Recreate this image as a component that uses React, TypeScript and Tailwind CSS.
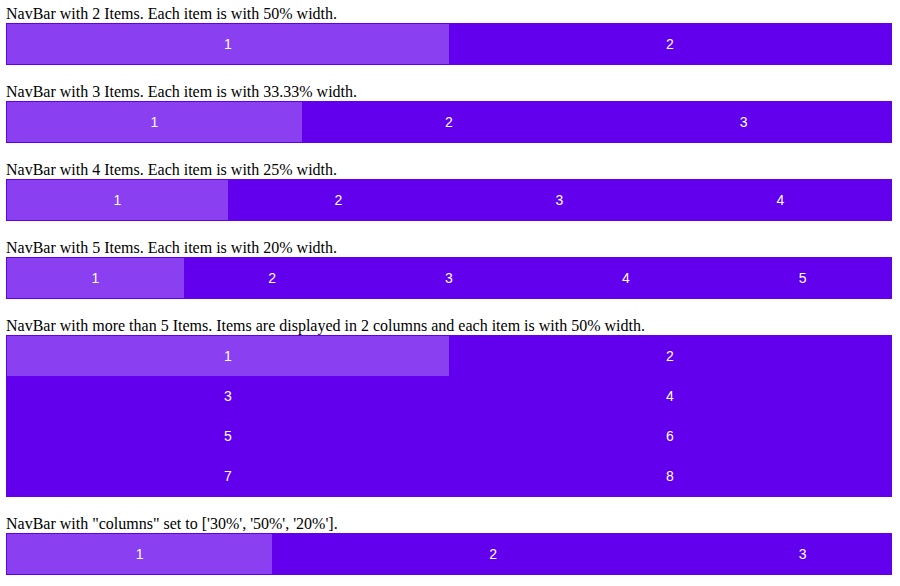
type NavBarProps = {
  count: number;
  columns?: string[];
};

function NavBar({ count, columns }: NavBarProps) {
  const items = Array.from({ length: count }, (_, i) => i + 1);

  // more than 5 items wrap into 2 columns
  const cols =
    columns ?? (count > 5 ? ['50%', '50%'] : items.map(() => `${100 / count}%`));

  return (
    <div
      className="grid border border-[#6200ee] bg-[#6200ee] font-['Liberation_Sans',Arial,sans-serif]"
      style={{ gridTemplateColumns: cols.join(' ') }}
    >
      {items.map((n) => (
        <div
          key={n}
          className={`flex h-10 items-center justify-center text-sm text-white ${
            n === 1 ? 'bg-[#8a40f0]' : ''
          }`}
        >
          {n}
        </div>
      ))}
    </div>
  );
}

const examples: { label: string; count: number; columns?: string[] }[] = [
  { label: 'NavBar with 2 Items. Each item is with 50% width.', count: 2 },
  { label: 'NavBar with 3 Items. Each item is with 33.33% width.', count: 3 },
  { label: 'NavBar with 4 Items. Each item is with 25% width.', count: 4 },
  { label: 'NavBar with 5 Items. Each item is with 20% width.', count: 5 },
  {
    label:
      'NavBar with more than 5 Items. Items are displayed in 2 columns and each item is with 50% width.',
    count: 8,
  },
  {
    label: 'NavBar with "columns" set to [\'30%\', \'50%\', \'20%\'].',
    count: 3,
    columns: ['30%', '50%', '20%'],
  },
];

export default function App() {
  return (
    <div className="min-h-[586px] bg-white pt-[5px] pl-[6px] pr-[8px] font-['Liberation_Serif','Times_New_Roman',serif] text-black">
      {examples.map((ex) => (
        <div key={ex.label} className="mb-[18px]">
          <div className="text-base leading-[18px]">{ex.label}</div>
          <NavBar count={ex.count} columns={ex.columns} />
        </div>
      ))}
    </div>
  );
}
